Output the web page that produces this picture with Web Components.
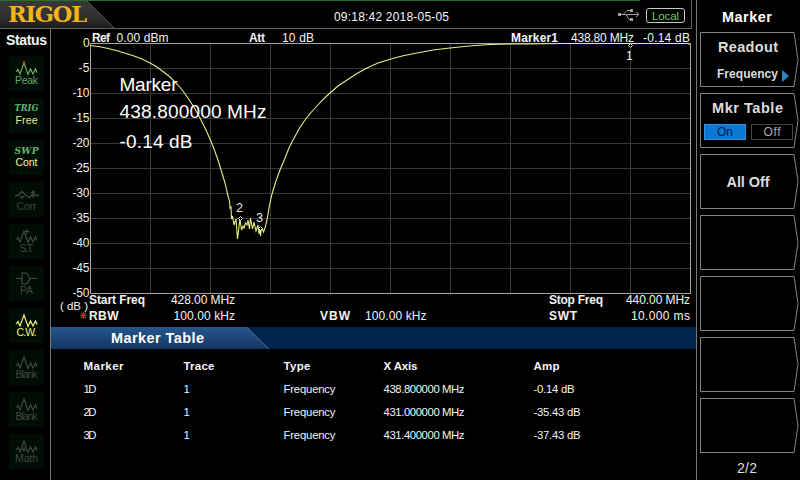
<!DOCTYPE html>
<html lang="en">
<head>
<meta charset="utf-8">
<title>Spectrum Analyzer</title>
<style>
html,body{margin:0;background:#000}
body{width:800px;height:480px;overflow:hidden;font-family:"Liberation Sans",Arial,sans-serif;color:#f4f4f4}
</style>
</head>
<body>
<script>
// Text label spread to a given width (attribute w) by letter spacing.
class FitText extends HTMLElement{
  constructor(){super();
    this.attachShadow({mode:'open'}).innerHTML=`<style>:host{display:block;white-space:pre;flex:none;text-align:left}span{display:inline-block}</style><span><slot></slot></span>`;}
  connectedCallback(){
    const w=+this.getAttribute('w'),n=this.textContent.length;
    if(!w||n<2)return;
    const s=this.shadowRoot.querySelector('span');
    s.style.letterSpacing='0px';
    const nat=s.getBoundingClientRect().width;
    s.style.letterSpacing=((w-nat)/(n-1)).toFixed(3)+'px';
    this.style.width=w+'px';
  }
}
customElements.define('fit-text',FitText);

function define(name,html){
  const t=document.createElement('template');
  t.innerHTML=html;
  customElements.define(name,class extends HTMLElement{
    connectedCallback(){ if(!this.shadowRoot) this.attachShadow({mode:'open'}).append(document.importNode(t.content,true)); }
  });
}

define('top-bar',`<style>
:host{display:flex;height:28px;width:691px;border-bottom:1px solid #636363;border-right:1px solid #636363;background:linear-gradient(90deg,#2c6a2c 640px,#000 640px) 0 0/100% 1px no-repeat;align-items:flex-start}
.logo{width:114px;height:28px;position:relative;flex:none}
.logo svg{position:absolute;left:0;top:0}
.logo fit-text{position:relative;padding:1px 0 0 8px;font:bold 22.5px/26px "DejaVu Serif",serif;color:#f5b31c}
.date{padding:11px 0 0 220px;font-size:12px;line-height:12px}
.usb{margin:8px 0 0 169px;flex:none}
.local{margin:8px 0 0 6px;width:37px;height:13px;border:1px solid #c9c9c9;border-radius:3px;display:flex;justify-content:center;font-size:11.5px;line-height:15px;color:#5fd35f}
</style>
<div class="logo"><svg width="114" height="28"><defs><linearGradient id="g" x2="0" y2="1"><stop stop-color="#383838"/><stop offset=".6" stop-color="#303030"/><stop offset="1" stop-color="#1b1b1b"/></linearGradient></defs><path d="M0 1H87L114 28H0Z" fill="url(#g)"/><path d="M87 1L114 28" stroke="#555"/></svg><fit-text w="79">RIGOL</fit-text></div>
<fit-text class="date" w="115">09:18:42 2018-05-05</fit-text>
<svg class="usb" width="22" height="15" fill="none" stroke="#a0a0a0"><path d="M1 6.500H20M5 6.500L9 2.500H12M8 6.500L11 11.500H13M18 4L21 6.500L18 9"/><path d="M0 5h3v3H0zM12 1h3v3h-3zM12 10h3v3h-3z" fill="#a0a0a0" stroke="none"/></svg>
<div class="local"><fit-text w="27">Local</fit-text></div>`);

const WAVE='M1 12L3 9.500L5 14L9 3L13 14.500L15.500 9L18 14L20.500 9L22 12.500';
const ICONS={
 wave:`<path d="${WAVE}"/>`,
 peak:`<path d="${WAVE}"/><path d="M8 4.500L9 2L10 4.500" stroke="#d84a3a"/>`,
 corr:'<path d="M0 9.500H3L7 5.500L11 9.500L14 11.500L18 8L21 9.500H24M5 10L7 12L9 10M18 5v7M16 7L18 5L20 7" stroke-width="1.300"/>',
 st:`<path d="${WAVE}"/><path d="M12 1v5M9.500 3.500h5"/>`,
 pa:'<path d="M1 8.500H7M7 3V14H11Q14 12 15 8.500Q14 5 11 3ZM15 8.500H22"/>',
 math:`<path d="${WAVE}"/><path d="M9 9v5M6.500 11.500h5" />`
};
class StatusTile extends HTMLElement{
  connectedCallback(){
    if(this.shadowRoot)return;
    const i=this.getAttribute('icon'),c=this.getAttribute('color'),l=this.getAttribute('ink')||c,w=this.getAttribute('w');
    const top=ICONS[i]?`<svg width="24" height="17" fill="none" stroke="${c}" stroke-width="1.200">${ICONS[i]}</svg>`:`<fit-text class="word" w="24">${i}</fit-text>`;
    this.attachShadow({mode:'open'}).innerHTML=`<style>
    :host{display:flex;flex-direction:column;align-items:center;width:35px;height:35px;background:#010c04;color:${l}}
    svg{margin-top:4px;flex:none}
    .word{font:italic bold ${i==='SWP'?10:9}px/13px "DejaVu Serif Condensed","DejaVu Serif",serif;color:#5fb573;margin-top:4px;height:13px;margin-bottom:-1px}
    .lab{font:10.500px/11px "Liberation Sans",sans-serif;margin-top:-2px}
    .word+.lab{margin-top:1px}
    </style>${top}<fit-text class="lab" w="${w}">${this.getAttribute('label')}</fit-text>`;
  }
}
customElements.define('status-tile',StatusTile);

define('status-rail',`<style>
:host{display:flex;flex-direction:column;align-items:center;gap:7px;width:50px;height:451px;border-right:1px solid #777;box-sizing:content-box}
h1{margin:4px 0 -1px 3px;font-size:14px;line-height:14px;height:17px;font-weight:bold}
status-tile{margin-left:3px}
</style><h1><fit-text w="41">Status</fit-text></h1>
<status-tile icon="peak" label="Peak" color="#6fae62" ink="#61a967" w="23"></status-tile>
<status-tile icon="TRIG" label="Free" color="#e6f09a" w="22"></status-tile>
<status-tile icon="SWP" label="Cont" color="#f0f5a4" w="22"></status-tile>
<status-tile icon="corr" label="Corr" color="#3f4a42" w="20"></status-tile>
<status-tile icon="st" label="S.T." color="#3f4a42" w="14"></status-tile>
<status-tile icon="pa" label="PA" color="#3f4a42" w="13"></status-tile>
<status-tile icon="wave" label="C.W." color="#f1f578" w="20"></status-tile>
<status-tile icon="wave" label="Blank" color="#3f4a42" w="22"></status-tile>
<status-tile icon="wave" label="Blank" color="#3f4a42" w="22"></status-tile>
<status-tile icon="math" label="Math" color="#3f4a42" w="23"></status-tile>`);

// Trace plot; coordinates are screen pixels, grid cells are 60x25.
let grid='',labels='';
for(let i=1;i<10;i++)grid+=`M${90.5+60*i} 43V293M90 ${43.5+25*i}H690`;
for(let i=0;i<11;i++){const s=i?'-'+5*i:'0',w=[6.5,11,17][s.length-1];labels+=`<text x="${89.5-w}" y="${47+25*i}" textLength="${w}">${s}</text>`;}
define('trace-plot',`<style>
:host{display:block;height:250px}
svg{display:block;overflow:visible}
text{font:12px "Liberation Sans",Arial,sans-serif;fill:#eee}
.big text{font-size:19px;fill:#fff}
</style><svg width="645" height="250" viewBox="51 43 645 250">
<path d="${grid}" stroke="#393939" fill="none"/>
<path d="M90.500 43.500H690.500V293.500H90.500Z" fill="none" stroke="#a5a5a5"/>
<path d="M90 45.500L100 46.800L108 48.500L118 51L126 53.500L134 56L142 59L150 63L157 67L163 71.500L170 77L177 84L183 91L190 101L195 109L200 118L205 128L210 139L214 149L218 160L222 173L225 183L228 196L229.500 201L230 208L231 207L231.500 219L232.500 216L234 225L236 219L237.500 239L240 219L241.500 230L243 226L244 228L245.500 223L247 225L248 220L249.500 229L250.500 218L252.500 229L254 222L256 231L258 225L259 234L260 229L260.500 236L261.500 227L263.500 232L265 228L267 220L269 208L270 203L272 194L276 181L280 170L285 158L289 148L293 140L299 129L305 120L311 112.500L317 106L323 99.500L330 93L338 86L347 80L357 73.500L367 68L378 63L390 59.200L403 55.700L417 53L433 50L450 48L464 46.500L475 45.500L490 44.500L510 44H527L560 43.500H688L690.500 44.500" fill="none" stroke="#e8ec84" stroke-width="1.100"/>
<g fill="#000" stroke="#eee"><path d="M630.500 43.500l2 2l-2 2l-2-2zM240.500 216.500l2 2l-2 2l-2-2z"/><path d="M260.500 226.500l2 2l-2 2l-2-2z" stroke="#f3f59a"/></g>
${labels}
<text x="626" y="60">1</text><text x="236.300" y="212">2</text><text x="256.300" y="222">3</text>
<g class="big"><text x="119.500" y="91" textLength="58">Marker</text><text x="119.500" y="118" textLength="147">438.800000 MHz</text><text x="119.500" y="148" textLength="73">-0.14 dB</text></g>
</svg>`);

define('amplitude-row',`<style>
:host{display:grid;grid-template-columns:24.500px 132.500px 33px 229px 60px 72px 48px;padding:3px 0 0 41px;height:11px;font-size:12px;line-height:12px;position:relative}
</style><b><fit-text w="18">Ref</fit-text></b><fit-text w="52">0.00 dBm</fit-text><b><fit-text w="16">Att</fit-text></b><fit-text w="32">10 dB</fit-text><b><fit-text w="47">Marker1</fit-text></b><fit-text w="63">438.80 MHz</fit-text><fit-text w="47">-0.14 dB</fit-text>`);

define('sweep-readout',`<style>
:host{display:flex;height:34px;font-size:12px;line-height:12px}
.unit{width:38px;display:flex;flex-direction:column;align-items:flex-end;padding-top:7px;height:27px}
.unit svg{margin:0 2px 0 0}
.unit fit-text{margin-right:1px;font-size:11.500px}
.rows{display:grid;grid-template-columns:60px 86px 85px 45px 184px 77px 64px;grid-template-rows:12px 12px;row-gap:4px;padding-top:1px}
.r{justify-self:end}
</style><div class="unit"><fit-text w="28">( dB )</fit-text><svg width="7" height="7"><path d="M3.500 0V7M0 3.500H7M1 1L6 6M6 1L1 6" stroke="#e01818" stroke-width="1.200"/></svg></div>
<div class="rows">
<b><fit-text w="56">Start Freq</fit-text></b><fit-text class="r" w="64">428.00 MHz</fit-text><i></i><i></i><i></i><b><fit-text w="54">Stop Freq</fit-text></b><fit-text class="r" w="64">440.00 MHz</fit-text>
<b><fit-text w="29.500">RBW</fit-text></b><fit-text class="r" w="61.500">100.00 kHz</fit-text><i></i><b><fit-text w="30">VBW</fit-text></b><fit-text w="61.500">100.00 kHz</fit-text><b><fit-text w="28">SWT</fit-text></b><fit-text class="r" w="59">10.000 ms</fit-text>
</div>`);

const rows=[['1D','438.800000 MHz','-0.14 dB',41],['2D','431.000000 MHz','-35.43 dB',47],['3D','431.400000 MHz','-37.43 dB',47]];
define('marker-table',`<style>
:host{display:block}
.title{height:22px;background:#02234d;position:relative}
.title svg{position:absolute;left:0;top:0}
.title fit-text{position:relative;padding:3px 0 0 60px;font:bold 14.500px/16px "Liberation Sans",Arial,sans-serif;color:#fff}
.grid{display:grid;grid-template-columns:100px 100px 100px 150px 100px;grid-template-rows:repeat(4,12px);row-gap:11px;padding:11px 0 0 32.500px;font-size:11.300px;line-height:12px}
b{font-size:11.500px}
</style><div class="title"><svg width="219" height="22"><defs><linearGradient id="t" x2="0" y2="1"><stop stop-color="#25568d"/><stop offset="1" stop-color="#133760"/></linearGradient></defs><path d="M0 0H195L217 22H0Z" fill="url(#t)"/><path d="M195.500 0L217.500 22" stroke="#5380b2"/></svg><fit-text w="93">Marker Table</fit-text></div>
<div class="grid"><b><fit-text w="40">Marker</fit-text></b><b><fit-text w="31">Trace</fit-text></b><b><fit-text w="27">Type</fit-text></b><b><fit-text w="34">X Axis</fit-text></b><b><fit-text w="26">Amp</fit-text></b>
${rows.map(r=>`<fit-text w="13">${r[0]}</fit-text><fit-text>1</fit-text><fit-text w="52">Frequency</fit-text><fit-text w="81">${r[1]}</fit-text><fit-text w="${r[3]}">${r[2]}</fit-text>`).join('')}
</div>`);

define('soft-key',`<style>
:host{display:flex;flex-direction:column;align-items:center;position:relative;width:99px;height:55px;color:#dcdcdc}
svg.o{position:absolute;inset:0}
::slotted(*){position:relative}
</style><svg class="o" width="99" height="55" fill="none" stroke="#858585"><path d="M.5 .5H94L98 27.500L94 54.500H.5Z"/></svg><slot></slot>`);

define('soft-menu',`<style>
:host{display:flex;flex-direction:column;gap:6px;width:100px;padding-left:3px;height:480px;border-left:1px solid #777;font:bold 14.500px/16px "Liberation Sans",Arial,sans-serif;box-sizing:content-box}
header{height:17px;padding:9px 0 0 22px;color:#fff;line-height:16px}
footer{font-weight:normal;font-size:14px;padding:1px 0 0 37px;color:#ddd}
.main{margin:7px 4px 0 0}
.sub{display:flex;margin:12px 0 0 7px;font-size:12px;line-height:13px}
.sub fit-text{margin-top:1px}
.sub svg{margin:3px 0 0 4px}
.onoff{display:flex;gap:5px;margin:2px 6px 0 4px;font:bold 12px/14px "Liberation Sans",sans-serif}
.onoff div{width:40px;height:14px;border:1px solid #444;display:flex;justify-content:center;color:#aaa}
.onoff .on{background:#0b78d4;border-color:#3a8ed8;color:#031a3c}
.onoff fit-text{font-weight:normal}
</style><header><fit-text w="50">Marker</fit-text></header>
<soft-key><fit-text class="main" style="margin-left:-3px;margin-right:0" w="60">Readout</fit-text><div class="sub"><fit-text w="61">Frequency</fit-text><svg width="7" height="12"><path d="M0 0L7 6L0 12Z" fill="#2588c8"/></svg></div></soft-key>
<soft-key><fit-text class="main" w="71">Mkr Table</fit-text><div class="onoff" style="margin-top:8px"><div class="on"><fit-text w="16">On</fit-text></div><div><fit-text w="17">Off</fit-text></div></div></soft-key>
<soft-key><fit-text style="margin:20px 3px 0 0" w="43">All Off</fit-text></soft-key>
<soft-key></soft-key><soft-key></soft-key><soft-key></soft-key><soft-key></soft-key>
<footer><fit-text w="20">2/2</fit-text></footer>`);

define('analyzer-screen',`<style>
:host{display:flex;width:800px;height:480px;overflow:hidden;background:#000}
.left{width:696px;height:480px;flex:none}
.body{display:flex}
main{width:645px;flex:none}
</style><div class="left"><top-bar></top-bar><div class="body"><status-rail></status-rail><main><amplitude-row></amplitude-row><trace-plot></trace-plot><sweep-readout></sweep-readout><marker-table></marker-table></main></div></div><soft-menu></soft-menu>`);
document.body.append(document.createElement('analyzer-screen'));
</script>
</body>
</html>
